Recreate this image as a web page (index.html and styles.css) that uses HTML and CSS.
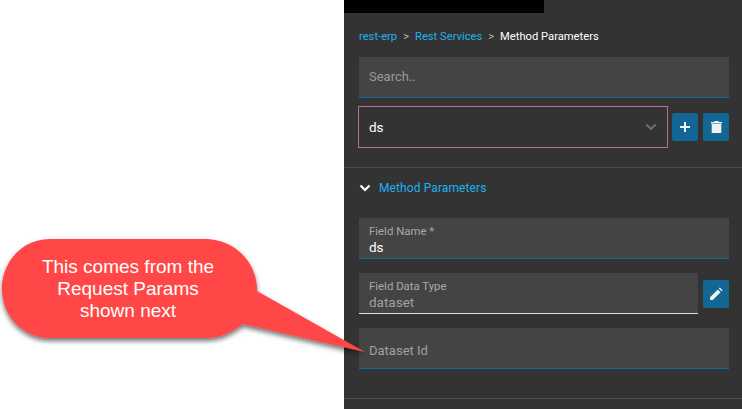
FILE: index.html
```html
<!DOCTYPE html>
<html lang="en">
<head>
<meta charset="utf-8">
<title>Method Parameters</title>
<link rel="stylesheet" href="styles.css">
</head>
<body>
<div class="page">
  <div class="blank"></div>
  <main class="panel">
    <div class="topbar"></div>
    <nav class="crumbs">
      <a>rest-erp</a><span class="sep">&gt;</span><a>Rest Services</a><span class="sep">&gt;</span><span class="current">Method Parameters</span>
    </nav>
    <section class="top">
      <div class="search">Search..</div>
      <div class="select-row">
        <div class="select">
          <span>ds</span>
          <svg class="caret" width="12" height="8" viewBox="0 0 12 8"><path d="M1.500 1.500 6 6l4.500-4.500" fill="none" stroke="#6f6f6f" stroke-width="2"/></svg>
        </div>
        <button class="btn">
          <svg width="12" height="12" viewBox="0 0 12 12"><path d="M6 1v10M1 6h10" stroke="#eef3f6" stroke-width="2"/></svg>
        </button>
        <button class="btn">
          <svg width="11" height="12" viewBox="0 0 11 12"><path d="M3.500 0h4l.5 1h3v1.500H0V1h3zM.7 3h9.600v9H.7z" fill="#eef1f4"/></svg>
        </button>
      </div>
    </section>
    <section class="params">
      <h2 class="head">
        <svg width="12" height="8" viewBox="0 0 12 8"><path d="M1.500 1.500 6 6l4.500-4.500" fill="none" stroke="#fff" stroke-width="2.200"/></svg>
        Method Parameters
      </h2>
      <div class="field">
        <label>Field Name *</label>
        <div class="value">ds</div>
      </div>
      <div class="row">
        <div class="field muted">
          <label>Field Data Type</label>
          <div class="value">dataset</div>
        </div>
        <button class="btn">
          <svg width="14" height="14" viewBox="0 0 14 14"><path d="M1 13V10.200L8.800 2.400l2.800 2.800L3.800 13zM9.800 1.400l1-1 2.800 2.800-1 1z" fill="#eef3f6"/></svg>
        </button>
      </div>
      <div class="field empty">Dataset Id</div>
    </section>
  </main>
  <div class="callout">
    <svg class="bubble" width="370" height="125" viewBox="0 0 370 125">
      <defs>
        <filter id="sh" x="-5%" y="-5%" width="110%" height="120%"><feDropShadow dx="0" dy="3" stdDeviation="2.500" flood-color="#000" flood-opacity=".55"/></filter>
      </defs>
      <path filter="url(#sh)" fill="#ff4646" d="M50 4H204C236 4 257 28 257 55V56L365 117 243 89C232 97 222 103 205 103H50C22 103 2 80 2 54 2 27 22 4 50 4Z"/>
    </svg>
    <p class="note">This comes from the<br>Request Params<br>shown next</p>
  </div>
</div>
</body>
</html>
```

FILE: styles.css
```css
* { box-sizing: border-box; }
html, body { margin: 0; padding: 0; }
body { font-family: Roboto, "Noto Sans", sans-serif; background: #fff; }
.page { position: relative; display: flex; width: 742px; height: 409px; overflow: hidden; }
.blank { flex: 0 0 344px; background: #fff; }
.panel { flex: 1; background: #333; color: #fff; }
.topbar { width: 200px; height: 13px; background: #000; }
.crumbs { display: flex; align-items: center; height: 16px; margin: 15px 0 0 15px; font-size: 11.200px; color: #ccc; }
.crumbs a { color: #1eb0f0; }
.sep { margin: 0 6px; color: #bbb; }
.current { color: #fff; }
.top { padding: 13px 13px 19px 15px; border-bottom: 1px solid #4d4d4d; }
.search { height: 41px; padding: 0 10px; line-height: 40px; font-size: 13px; color: #9a9a9a; background: #444; border-bottom: 1px solid #17679a; }
.select-row { display: flex; align-items: center; gap: 5px; margin: 8px 0 0 -1px; }
.select { display: flex; align-items: center; justify-content: space-between; flex: 0 0 310px; height: 42px; margin-right: -1px; padding: 0 10px; border: 1px solid #b5709a; font-size: 13.500px; }
.btn { display: flex; align-items: center; justify-content: center; flex: 0 0 26px; height: 28px; padding: 0; border: 0; border-radius: 2px; background: #136794; }
.params { height: 231px; padding: 13px 13px 0 15px; border-bottom: 1px solid #4d4d4d; }
.head { display: flex; align-items: center; gap: 8px; height: 14px; margin: 0 0 23px; font-size: 12px; font-weight: 400; letter-spacing: .1px; color: #1eb0f0; }
.field { height: 41px; padding: 7px 10px 0; background: #444; border-bottom: 1px solid #0f6a9c; font-size: 13.500px; }
.field label { display: block; font-size: 11.400px; line-height: 13px; color: #a8a8a8; }
.field .value { line-height: 19px; }
.row { display: flex; align-items: center; gap: 5px; margin: 14px 0; }
.row .field { flex: 1; }
.muted { border-bottom-color: #ddd; }
.muted .value { color: #a0a0a0; }
.empty { padding-top: 14px; line-height: 18px; font-size: 13px; color: #a0a0a0; }
.callout { position: absolute; left: 0; top: 235px; width: 370px; height: 125px; }
.bubble { display: block; }
.note { position: absolute; left: 28px; top: 21px; width: 200px; margin: 0; font-family: "Liberation Sans", Arial, sans-serif; font-size: 19px; line-height: 22px; text-align: center; color: #fff; }
```
